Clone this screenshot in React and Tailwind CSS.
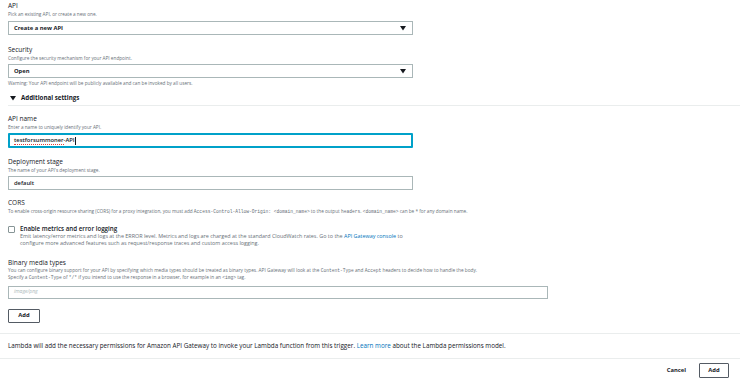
import React from 'react';

const font = { fontFamily: '"Open Sans", "Noto Sans", sans-serif' };

const Caret = ({ className = '' }) => (
    <svg width="6" height="5" viewBox="0 0 6 5" className={className}>
        <polygon points="0,0 6,0 3,4.5" fill="#16191f" />
    </svg>
);

const Label = ({ children, className = '' }) => (
    <div className={`text-[6.5px] leading-[8px] text-[#16191f] ${className}`}>{children}</div>
);

const Desc = ({ children, className = '' }) => (
    <div className={`text-[4.7px] leading-[6px] text-[#687078] ${className}`}>{children}</div>
);

const Select = ({ value, className = '' }) => (
    <div className={`w-[405px] h-[14px] border border-[#aab7b8] flex items-center justify-between pl-[5px] pr-[6px] ${className}`}>
        <span className="text-[5.8px] font-bold text-[#16191f]">{value}</span>
        <Caret />
    </div>
);

const Mono = ({ children }) => (
    <span className="text-[4.6px] leading-none" style={{ fontFamily: '"Liberation Mono", monospace' }}>{children}</span>
);

export default function App() {
    return (
        <div className="w-[740px] h-[383px] bg-white overflow-hidden" style={font}>
            <div className="pl-[8px]">
                {/* API */}
                <Label className="pt-[2px]">API</Label>
                <Desc className="mt-[1px]">Pick an existing API, or create a new one.</Desc>
                <Select value="Create a new API" className="mt-[4px]" />

                {/* Security */}
                <Label className="mt-[11px]">Security</Label>
                <Desc className="mt-[1px]">Configure the security mechanism for your API endpoint.</Desc>
                <Select value="Open" className="mt-[3px]" />
                <Desc className="mt-[2px]">Warning: Your API endpoint will be publicly available and can be invoked by all users.</Desc>

                {/* Additional settings */}
                <div className="mt-[8px] flex items-center gap-[5px] pl-[2px] h-[8px]">
                    <Caret />
                    <span className="text-[6.2px] font-bold text-[#16191f]">Additional settings</span>
                </div>
                <div className="mt-[3px] h-px bg-[#eaeded]" />

                <Label className="mt-[9px]">API name</Label>
                <Desc className="mt-[1px]">Enter a name to uniquely identify your API.</Desc>
                <div className="mt-[3px] w-[405px] h-[15px] border-2 border-[#00a1c9] rounded-[1px] flex items-center pl-[4px]">
                    <span className="text-[5.8px] font-semibold text-[#16191f] leading-[7px]">
                        <span className="border-b border-dotted border-[#e0413a]">testforsummoner</span>-API
                    </span>
                    <span className="w-px h-[8px] bg-[#16191f]" />
                </div>

                <Label className="mt-[10px]">Deployment stage</Label>
                <Desc className="mt-[1px]">The name of your API's deployment stage.</Desc>
                <div className="mt-[3px] w-[405px] h-[14px] border border-[#aab7b8] flex items-center pl-[5px]">
                    <span className="text-[5.8px] font-semibold text-[#16191f]">default</span>
                </div>

                {/* CORS */}
                <Label className="mt-[9px]">CORS</Label>
                <Desc className="mt-[1px]">
                    To enable cross-origin resource sharing (CORS) for a proxy integration, you must add <Mono>Access-Control-Allow-Origin: &lt;domain_name&gt;</Mono> to the output <Mono>headers</Mono>. <Mono>&lt;domain_name&gt;</Mono> can be * for any domain name.
                </Desc>

                {/* Metrics */}
                <div className="mt-[10px] flex gap-[5px]">
                    <div className="w-[7px] h-[7px] mt-[1px] border border-[#879596] rounded-[1px] shrink-0" />
                    <div>
                        <div className="text-[6.2px] leading-[8px] font-semibold text-[#16191f]">Enable metrics and error logging</div>
                        <div className="text-[5.4px] leading-[7px] text-[#687078] w-[392px]">
                            Emit latency/error metrics and logs at the ERROR level. Metrics and logs are charged at the standard CloudWatch rates. Go to the <span className="text-[#0073bb]">API Gateway console</span> to configure more advanced features such as request/response traces and custom access logging.
                        </div>
                    </div>
                </div>

                {/* Binary media types */}
                <Label className="mt-[12px]">Binary media types</Label>
                <div className="text-[4.75px] leading-[7px] text-[#687078]">
                    You can configure binary support for your API by specifying which media types should be treated as binary types. API Gateway will look at the <Mono>Content-Type</Mono> and <Mono>Accept</Mono> headers to decide how to handle the body.
                    <br />
                    Specify a <Mono>Content-Type</Mono> of <Mono>*/*</Mono> if you intend to use the response in a browser, for example in an <Mono>&lt;img&gt;</Mono> tag.
                </div>
                <div className="mt-[5px] w-[540px] h-[13px] border border-[#aab7b8] flex items-center pl-[5px]">
                    <span className="text-[5px] italic text-[#aab7b8]">image/png</span>
                </div>
                <button className="mt-[10px] w-[32px] h-[14px] border border-[#545b64] rounded-[1px] text-[5.8px] font-bold text-[#16191f] flex items-center justify-center">
                    Add
                </button>
            </div>

            <div className="mt-[10px] h-px bg-[#eaeded]" />
            <div className="pl-[8px] h-[24px] flex items-center text-[6.3px] text-[#16191f]">
                <span>
                    Lambda will add the necessary permissions for Amazon API Gateway to invoke your Lambda function from this trigger. <span className="text-[#0073bb]">Learn more</span> about the Lambda permissions model.
                </span>
            </div>
            <div className="h-px bg-[#eaeded]" />
            <div className="flex items-center justify-end gap-[13px] pr-[11px] mt-[4px]">
                <span className="text-[5.8px] font-bold text-[#16191f]">Cancel</span>
                <button className="w-[30px] h-[15px] border border-[#545b64] rounded-[1px] text-[5.8px] font-bold text-[#16191f] flex items-center justify-center">
                    Add
                </button>
            </div>
        </div>
    );
}
